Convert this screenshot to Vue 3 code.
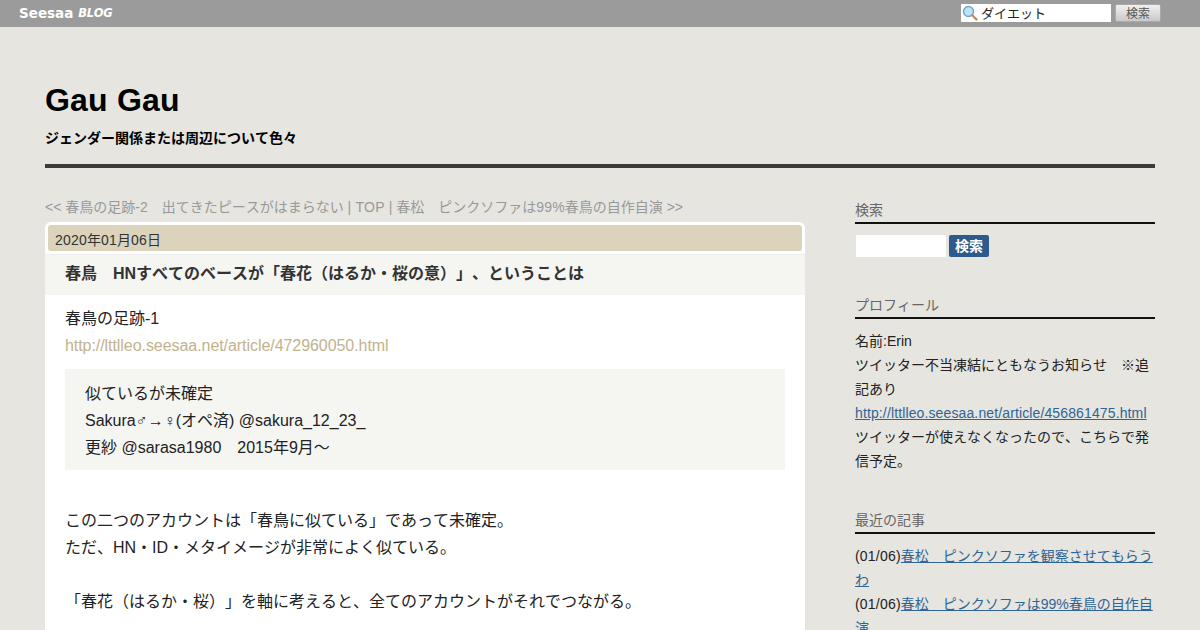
<script setup>
const recent = [
  ['(01/06)', '春松　ピンクソファを観察させてもらうわ'],
  ['(01/06)', '春松　ピンクソファは99%春鳥の自作自演'],
]
</script>

<template>
  <div class="page">
    <header class="topbar">
      <div class="logo"><span class="logo-a">Seesaa</span><span class="logo-b">BLOG</span></div>
      <div class="topsearch">
        <div class="topinput">
          <svg class="lens" width="16" height="16" viewBox="0 0 16 16">
            <circle cx="6.5" cy="6.5" r="5" fill="#bfe3f5" stroke="#6fa6c8" stroke-width="1.4" />
            <path d="M10.5 10.5 L14.5 14.5" stroke="#b98a5a" stroke-width="2.2" stroke-linecap="round" />
          </svg>
          <span>ダイエット</span>
        </div>
        <div class="topbtn">検索</div>
      </div>
    </header>

    <div class="wrap">
      <div class="masthead">
        <h1>Gau Gau</h1>
        <p>ジェンダー関係または周辺について色々</p>
      </div>

      <div class="columns">
        <main class="main">
          <div class="nav">&lt;&lt; 春鳥の足跡-2　出てきたピースがはまらない <span class="ls3">| TOP |</span> 春松　ピンクソファは<span class="ls">99%</span>春鳥の自作自演 &gt;&gt;</div>
          <article class="card">
            <div class="date"><span class="ls2">2020</span>年<span class="ls2">01</span>月<span class="ls2">06</span>日</div>
            <h2>春鳥　HNすべてのベースが「春花（はるか・桜の意）」、ということは</h2>
            <div class="body">
              <div>春鳥の足跡-1</div>
              <div class="tan">http://lttlleo.seesaa.net/article/472960050.html</div>
              <blockquote>
                <div>似ているが未確定</div>
                <div>Sakura♂→♀(オペ済) @sakura_12_23_</div>
                <div>更紗 @sarasa1980　2015年9月～</div>
              </blockquote>
              <div class="para">この二つのアカウントは「春鳥に似ている」であって未確定。</div>
              <div>ただ、HN・ID・メタイメージが非常によく似ている。</div>
              <div class="para">「春花（はるか・桜）」を軸に考えると、全てのアカウントがそれでつながる。</div>
            </div>
          </article>
        </main>

        <aside class="side">
          <section class="widget w-search">
            <h3>検索</h3>
            <div class="searchrow">
              <div class="sinput"></div>
              <div class="sbtn">検索</div>
            </div>
          </section>
          <section class="widget w-profile">
            <h3>プロフィール</h3>
            <div class="wtext">
              <div>名前:Erin</div>
              <div>ツイッター不当凍結にともなうお知らせ　※追記あり</div>
              <a class="ls">http://lttlleo.seesaa.net/article/456861475.html</a>
              <div>ツイッターが使えなくなったので、こちらで発信予定。</div>
            </div>
          </section>
          <section class="widget">
            <h3>最近の記事</h3>
            <div class="wtext">
              <div v-for="r in recent" :key="r[1]"><span class="ls2">{{ r[0] }}</span><a>{{ r[1] }}</a></div>
            </div>
          </section>
        </aside>
      </div>
    </div>
  </div>
</template>

<style>
html, body { margin: 0; background: #e6e5e0; overflow: hidden; }
</style>

<style scoped>
.page {
  width: 1200px;
  height: 630px;
  overflow: hidden;
  background: #e6e5e0;
  font-family: "Liberation Sans", "Noto Sans CJK JP", sans-serif;
  color: #222;
  text-spacing-trim: space-all;
  font-kerning: none;
}
.ls { letter-spacing: 0.125px; }
.ls2 { letter-spacing: 0.2px; }
.ls3 { letter-spacing: 0.15px; }
.topbar {
  height: 27px;
  background: #9b9b9b;
  display: flex;
  justify-content: space-between;
  box-sizing: border-box;
  padding: 4px 39px 0 19px;
}
.logo { color: #fff; font-weight: 700; display: flex; gap: 5px; height: 18px; align-items: center; font-family: "DejaVu Sans", sans-serif; }
.logo-a { font-size: 13.5px; }
.logo-b { font-style: italic; font-size: 11.5px; letter-spacing: -0.3px; }
.topsearch { display: flex; gap: 4px; height: 18px; }
.topinput {
  width: 150px;
  height: 18px;
  background: #fff;
  display: flex;
  align-items: center;
  font-size: 13px;
  color: #222;
  gap: 3px;
  padding-left: 1px;
  box-sizing: border-box;
}
.topinput span { position: relative; top: -1px; }
.lens { flex: none; }
.topbtn {
  width: 46px;
  height: 18px;
  box-sizing: border-box;
  background: linear-gradient(#f0f0f0, #c9c9c9);
  border: 1px solid #aaa;
  border-radius: 2px;
  text-align: center;
  font-size: 12px;
  line-height: 18px;
  color: #555;
}
.wrap { padding: 0 45px; }
.masthead {
  height: 141px;
  box-sizing: border-box;
  border-bottom: 4px solid #3c3b37;
  padding-top: 53px;
}
h1 { margin: 0; font-size: 32px; line-height: 40px; font-weight: 700; color: #000; letter-spacing: 0.2px; }
.masthead p { margin: 8px 0 0; font-size: 14px; line-height: 20px; font-weight: 700; color: #000; }
.columns { display: flex; justify-content: space-between; padding-top: 29px; }
.main { width: 760px; }
.nav { font-size: 14px; line-height: 20px; color: #999; margin-bottom: 5px; white-space: nowrap; }
.card { background: #fff; border-radius: 6px 6px 0 0; padding-top: 3px; height: 500px; }
.date {
  margin: 0 3px;
  height: 26px;
  background: #dbd3bc;
  border-radius: 3px;
  font-size: 14px;
  line-height: 30px;
  padding-left: 7px;
  color: #333;
}
h2 {
  margin: 3px 0 0;
  height: 41px;
  box-sizing: border-box;
  border-top: 1px solid #eee;
  background: #f5f5f1;
  font-size: 16px;
  line-height: 38px;
  font-weight: 700;
  color: #333;
  padding-left: 20px;
}
.body { padding: 10px 20px 0; font-size: 16px; line-height: 27px; color: #222; }
.tan { color: #c2b28e; letter-spacing: -0.06px; }
blockquote {
  margin: 10px 0 0;
  height: 101px;
  box-sizing: border-box;
  background: #f5f5f1;
  padding: 11px 20px 0;
}
.para { margin-top: 27px; }
blockquote + .para { margin-top: 37px; }
.side { width: 300px; padding-top: 3px; }
h3 {
  margin: 0;
  font-size: 14px;
  line-height: 20px;
  font-weight: 400;
  color: #666;
  border-bottom: 2px solid #111;
  height: 24px;
  box-sizing: border-box;
}
.searchrow { display: flex; gap: 3px; padding: 11px 0 0 1px; }
.sinput { width: 90px; height: 22px; background: #fff; }
.sbtn {
  width: 40px;
  height: 22px;
  background: #2c5a8c;
  border-radius: 2px;
  color: #fff;
  font-size: 14px;
  font-weight: 700;
  text-align: center;
  line-height: 22px;
}
.w-search { height: 95px; }
.w-profile { height: 215px; }
.wtext { font-size: 14px; line-height: 24px; color: #222; padding-top: 10px; }
.wtext a { color: #2f6496; text-decoration: underline; }
</style>
